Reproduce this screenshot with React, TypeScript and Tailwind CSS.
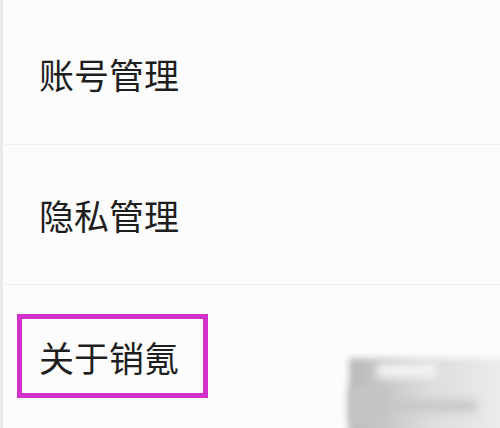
import React from "react";

export default function App() {
  const font = { fontFamily: '"Noto Sans CJK SC", "Noto Sans", sans-serif' };
  return (
    <div
      className="relative w-[500px] h-[428px] overflow-hidden bg-[#fcfcfc] text-[#1e1e1e] border-l-[3px] border-[#e9e9e9]"
      style={font}
    >
      <div className="flex flex-col">
        <div className="h-[144px] flex items-center pt-[3px] pl-[36px] text-[35px] leading-none">
          账号管理
        </div>
        <div className="h-[1px] bg-[#efefef] ml-[1px]" />
        <div className="h-[139px] flex items-center pl-[36px] text-[35px] leading-none">
          隐私管理
        </div>
        <div className="h-[1px] bg-[#efefef] ml-[1px]" />
        <div className="pt-[29px] pl-[14px]">
          <div className="w-[191px] h-[84px] border-[5px] border-[#d22fcb] flex items-center pl-[17px] text-[35px] leading-none">
            关于销氪
          </div>
        </div>
      </div>
      <div className="absolute left-[344px] top-[356px] w-[160px] h-[80px] bg-white/80">
        <div className="absolute left-[2px] top-[2px] right-0 bottom-0 bg-gradient-to-r from-[#b9b9b9] via-[#dcdcdc] to-[#ededed] blur-[3px]" />
        <div className="absolute left-[30px] top-[8px] w-[60px] h-[14px] bg-[#f3f3f3] blur-[4px]" />
        <div className="absolute left-[40px] top-[44px] w-[90px] h-[12px] bg-[#c8c8c8] blur-[4px]" />
        <div className="absolute left-[2px] top-[30px] w-[40px] h-[40px] bg-[#c4c4c4] blur-[4px]" />
      </div>
    </div>
  );
}
